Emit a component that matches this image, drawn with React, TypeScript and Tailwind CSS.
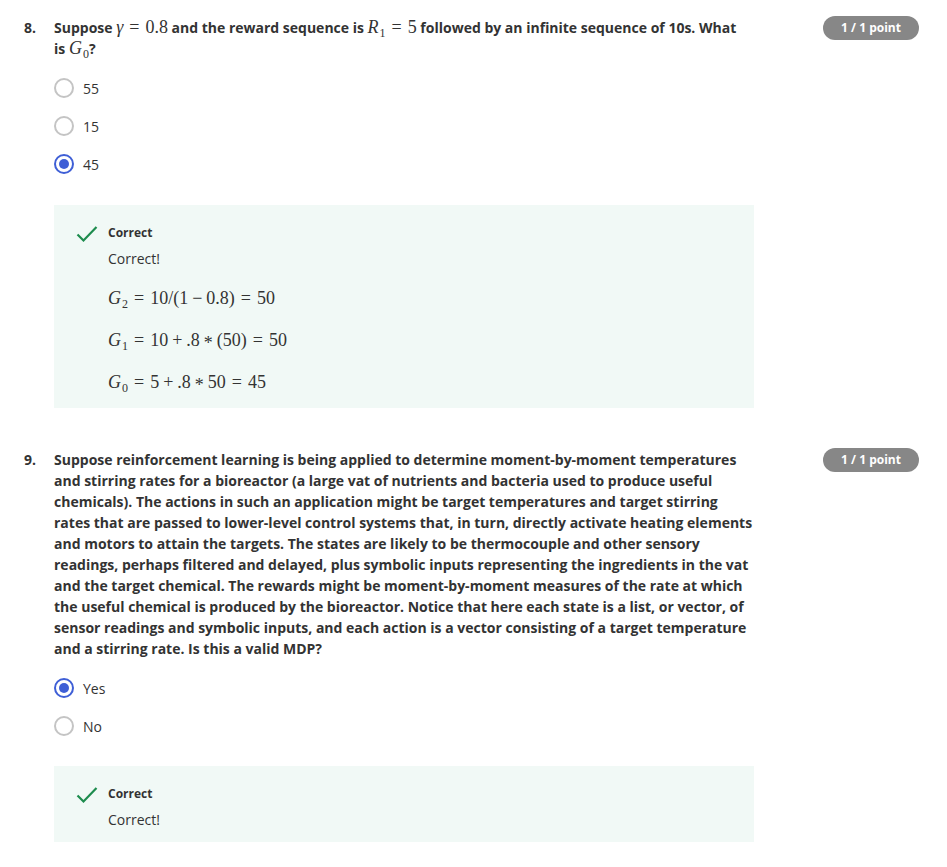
import React from "react"

const math = "font-['Liberation_Serif',serif] text-[18px] font-normal"

function V({ c, sub }: { c: string; sub?: string }) {
    return (
        <span className="italic">
            {c}
            {sub && <span className="not-italic text-[12px] relative top-[4px] ml-[1px]">{sub}</span>}
        </span>
    )
}

// relation and binary operator with KaTeX-like spacing
const R = ({ c = "=" }: { c?: string }) => <span className="mx-[6px]">{c}</span>
const B = ({ c }: { c: string }) => <span className="mx-[4px]">{c}</span>
const Star = () => <span className="mx-[4px] relative top-[3px]">*</span>

function Radio({ label, checked }: { label: string; checked?: boolean }) {
    return (
        <div className="flex items-center h-[38px]">
            {checked ? (
                <span className="w-[20px] h-[20px] rounded-full border-2 border-[#3f5fd6] flex items-center justify-center">
                    <span className="w-[10px] h-[10px] rounded-full bg-[#3f5fd6]" />
                </span>
            ) : (
                <span className="w-[20px] h-[20px] rounded-full border-2 border-[#c4c4c4]" />
            )}
            <span className="ml-[9px] text-[14px] text-[#333]">{label}</span>
        </div>
    )
}

function Check() {
    return (
        <svg width="22" height="18" viewBox="0 0 22 18" className="mt-[1px]">
            <path d="M1.5 9.5 L7.5 15.5 L20.5 2" fill="none" stroke="#1e8c4e" strokeWidth="2.2" />
        </svg>
    )
}

function Feedback({ children }: { children?: React.ReactNode }) {
    return (
        <div className="bg-[#f1f9f6] w-[700px] pl-[22px] pt-[19px] pb-[12px] flex">
            <Check />
            <div className="ml-[10px]">
                <div className="text-[12px] font-bold leading-[18px] text-[#333]">Correct</div>
                <div className="text-[14px] leading-[20px] mt-[7px] text-[#333]">Correct!</div>
                {children}
            </div>
        </div>
    )
}

function Badge() {
    return (
        <div className="ml-auto shrink-0 bg-[#878787] text-white text-[12px] font-bold rounded-full w-[96px] h-[24px] flex items-center justify-center -mt-[1px]">
            1 / 1 point
        </div>
    )
}

export default function App() {
    return (
        <div className="font-['Open_Sans',sans-serif] text-[#333] bg-white min-h-screen pl-[24px] pr-[28px] pt-[17px]">
            {/* question 8 */}
            <div className="flex">
                <div className="w-[30px] text-[14px] font-bold leading-[21px]">8.</div>
                <div className="w-[700px]">
                    <p className="text-[14px] font-bold leading-[21px] pr-[6px]">
                        Suppose <span className={`${math} leading-none`}><V c="γ" /><R />0.8</span> and the reward sequence is{" "}
                        <span className={`${math} leading-none`}><V c="R" sub="1" /><R />5</span> followed by an infinite sequence of 10s. What is{" "}
                        <span className={`${math} leading-none`}><V c="G" sub="0" /></span>?
                    </p>
                    <div className="mt-[10px]">
                        <Radio label="55" />
                        <Radio label="15" />
                        <Radio label="45" checked />
                    </div>
                    <div className="mt-[22px]">
                        <Feedback>
                            <div className={`${math} leading-[24px] mt-[17px] text-[#333]`}>
                                <div><V c="G" sub="2" /><R />10/(1<B c="−" />0.8)<R />50</div>
                                <div className="mt-[16px]"><V c="G" sub="1" /><R />10<B c="+" />.8<Star />(50)<R />50</div>
                                <div className="mt-[16px]"><V c="G" sub="0" /><R />5<B c="+" />.8<Star />50<R />45</div>
                            </div>
                        </Feedback>
                    </div>
                </div>
                <Badge />
            </div>

            {/* question 9 */}
            <div className="flex mt-[41px]">
                <div className="w-[30px] text-[14px] font-bold leading-[21px]">9.</div>
                <div className="w-[700px]">
                    <p className="text-[14px] font-bold leading-[21px]">
                        Suppose reinforcement learning is being applied to determine moment-by-moment temperatures and stirring rates for a bioreactor (a large vat of nutrients and bacteria used to produce useful chemicals). The actions in such an application might be target temperatures and target stirring rates that are passed to lower-level control systems that, in turn, directly activate heating elements and motors to attain the targets. The states are likely to be thermocouple and other sensory readings, perhaps filtered and delayed, plus symbolic inputs representing the ingredients in the vat and the target chemical. The rewards might be moment-by-moment measures of the rate at which the useful chemical is produced by the bioreactor. Notice that here each state is a list, or vector, of sensor readings and symbolic inputs, and each action is a vector consisting of a target temperature and a stirring rate. Is this a valid MDP?
                    </p>
                    <div className="mt-[10px]">
                        <Radio label="Yes" checked />
                        <Radio label="No" />
                    </div>
                    <div className="mt-[21px]">
                        <Feedback />
                    </div>
                </div>
                <Badge />
            </div>
        </div>
    )
}
